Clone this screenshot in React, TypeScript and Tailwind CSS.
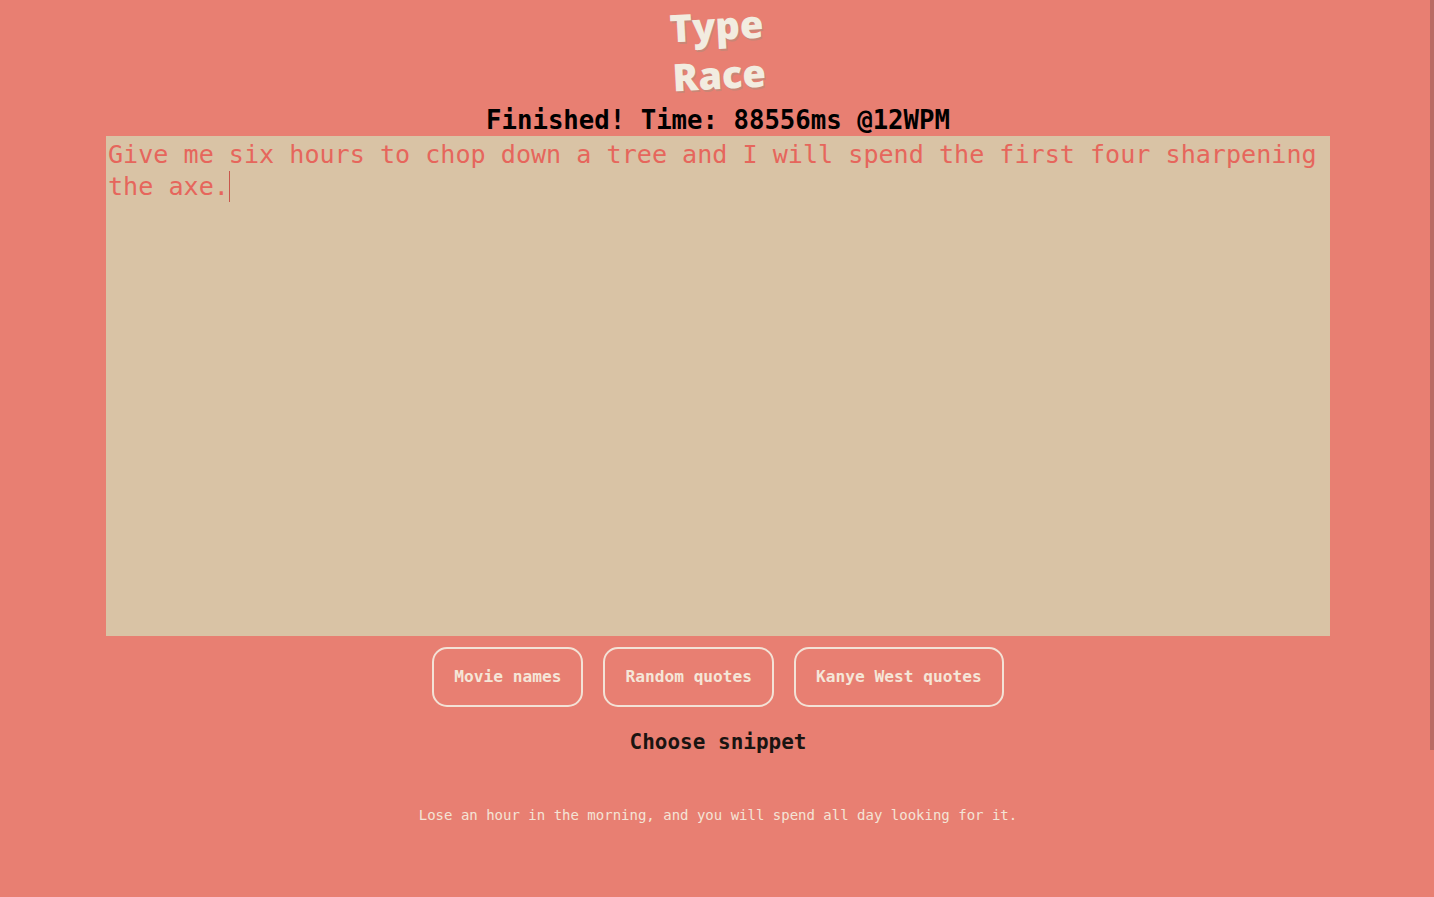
import React from "react";

const mono = "font-['DejaVu_Sans_Mono','Liberation_Mono',monospace]";

const snippets = ["Movie names", "Random quotes", "Kanye West quotes"];

export default function App() {
  return (
    <div className="h-screen overflow-y-scroll bg-[#e87f72] [&::-webkit-scrollbar]:w-1 [&::-webkit-scrollbar-track]:bg-transparent [&::-webkit-scrollbar-thumb]:bg-[#b96b64]">
      {/* scroll thumb, drawn in case the browser hides its own */}
      <div className="fixed right-0 top-0 h-[750px] w-1 bg-[#b96b64]" />
      <div className={`flex flex-col items-center pl-[2px] pt-[1px] pb-[248px] ${mono}`}>
        <h1 className="w-min text-center font-['Open_Sans',sans-serif] text-[38px] font-extrabold leading-[49px] text-[#f2ece0] -rotate-3 [text-shadow:1px_2px_0_#c98676]">
          Type Race
        </h1>
        <div className="mt-[5px] text-[25.7px] font-bold leading-[32px] text-black">
          Finished! Time: 88556ms @12WPM
        </div>
        <div className="h-[500px] w-[1224px] bg-[#d9c3a5] pl-[2px] pt-[3px] text-[25.1px] leading-[32px] text-[#e6665c]">
          Give me six hours to chop down a tree and I will spend the first four sharpening the axe.
          <span className="inline-block h-[31px] w-px align-top bg-[#c9574c]" />
        </div>
        <div className="mt-[11px] flex gap-[20px]">
          {snippets.map((s) => (
            <button
              key={s}
              className="rounded-[15px] border-2 border-[#f3e2d6] px-5 py-[18px] text-[16.2px] font-bold leading-5 text-[#f5e6d8]"
            >
              {s}
            </button>
          ))}
        </div>
        <div className="mt-[21px] text-[21px] font-bold leading-[28px] text-[#1a1411]">Choose snippet</div>
        <p className="mt-[49px] text-[14px] leading-5 text-[#f4e4d6]">
          Lose an hour in the morning, and you will spend all day looking for it.
        </p>
      </div>
    </div>
  );
}
